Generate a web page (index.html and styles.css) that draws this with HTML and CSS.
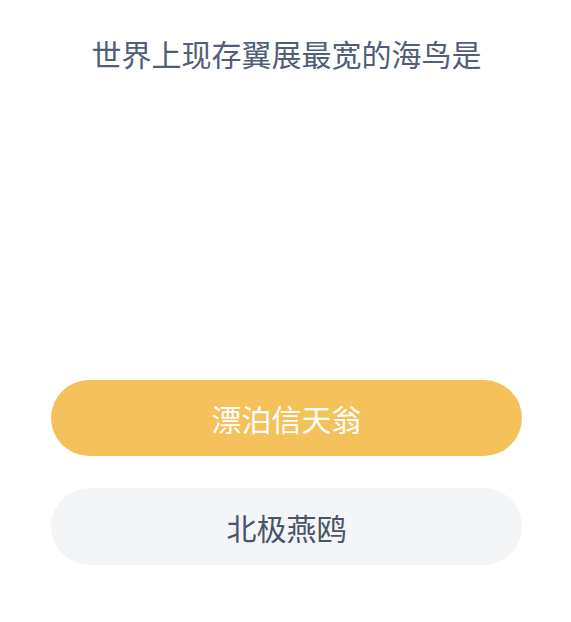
FILE: index.html
```html
<!DOCTYPE html>
<html lang="zh-CN">
  <head>
    <meta charset="UTF-8" />
    <meta name="viewport" content="width=device-width, initial-scale=1.0" />
    <title>答题</title>
    <link rel="stylesheet" href="styles.css">
  </head>
  <body>
    <div class="pagina">
      <h1 class="pergunta">世界上现存翼展最宽的海鸟是</h1>

      <div class="opcoes">
        <button class="opcao opcao-certa">漂泊信天翁</button>
        <button class="opcao">北极燕鸥</button>
      </div>
    </div>
  </body>
</html>
```

FILE: styles.css
```css
body {
  margin: 0;
  background-color: #ffffff;
  font-family: "Noto Sans CJK SC", "Noto Sans", sans-serif;
}

.pagina {
  padding: 31px 49px 0 51px;
}

.pergunta {
  margin: 0;
  font-size: 30px;
  font-weight: 400;
  line-height: 44px;
  color: #525d7a;
  text-align: center;
}

.opcoes {
  margin-top: 305px;
  display: flex;
  flex-direction: column;
  gap: 32px;
}

.opcao {
  height: 77px;
  border: none;
  border-radius: 39px;
  background-color: #f4f5f7;
  color: #4a5468;
  font-family: inherit;
  font-size: 30px;
  cursor: pointer;
}

.opcao-certa {
  height: 76px;
  background-color: #f5c15b;
  color: #ffffff;
}
```
